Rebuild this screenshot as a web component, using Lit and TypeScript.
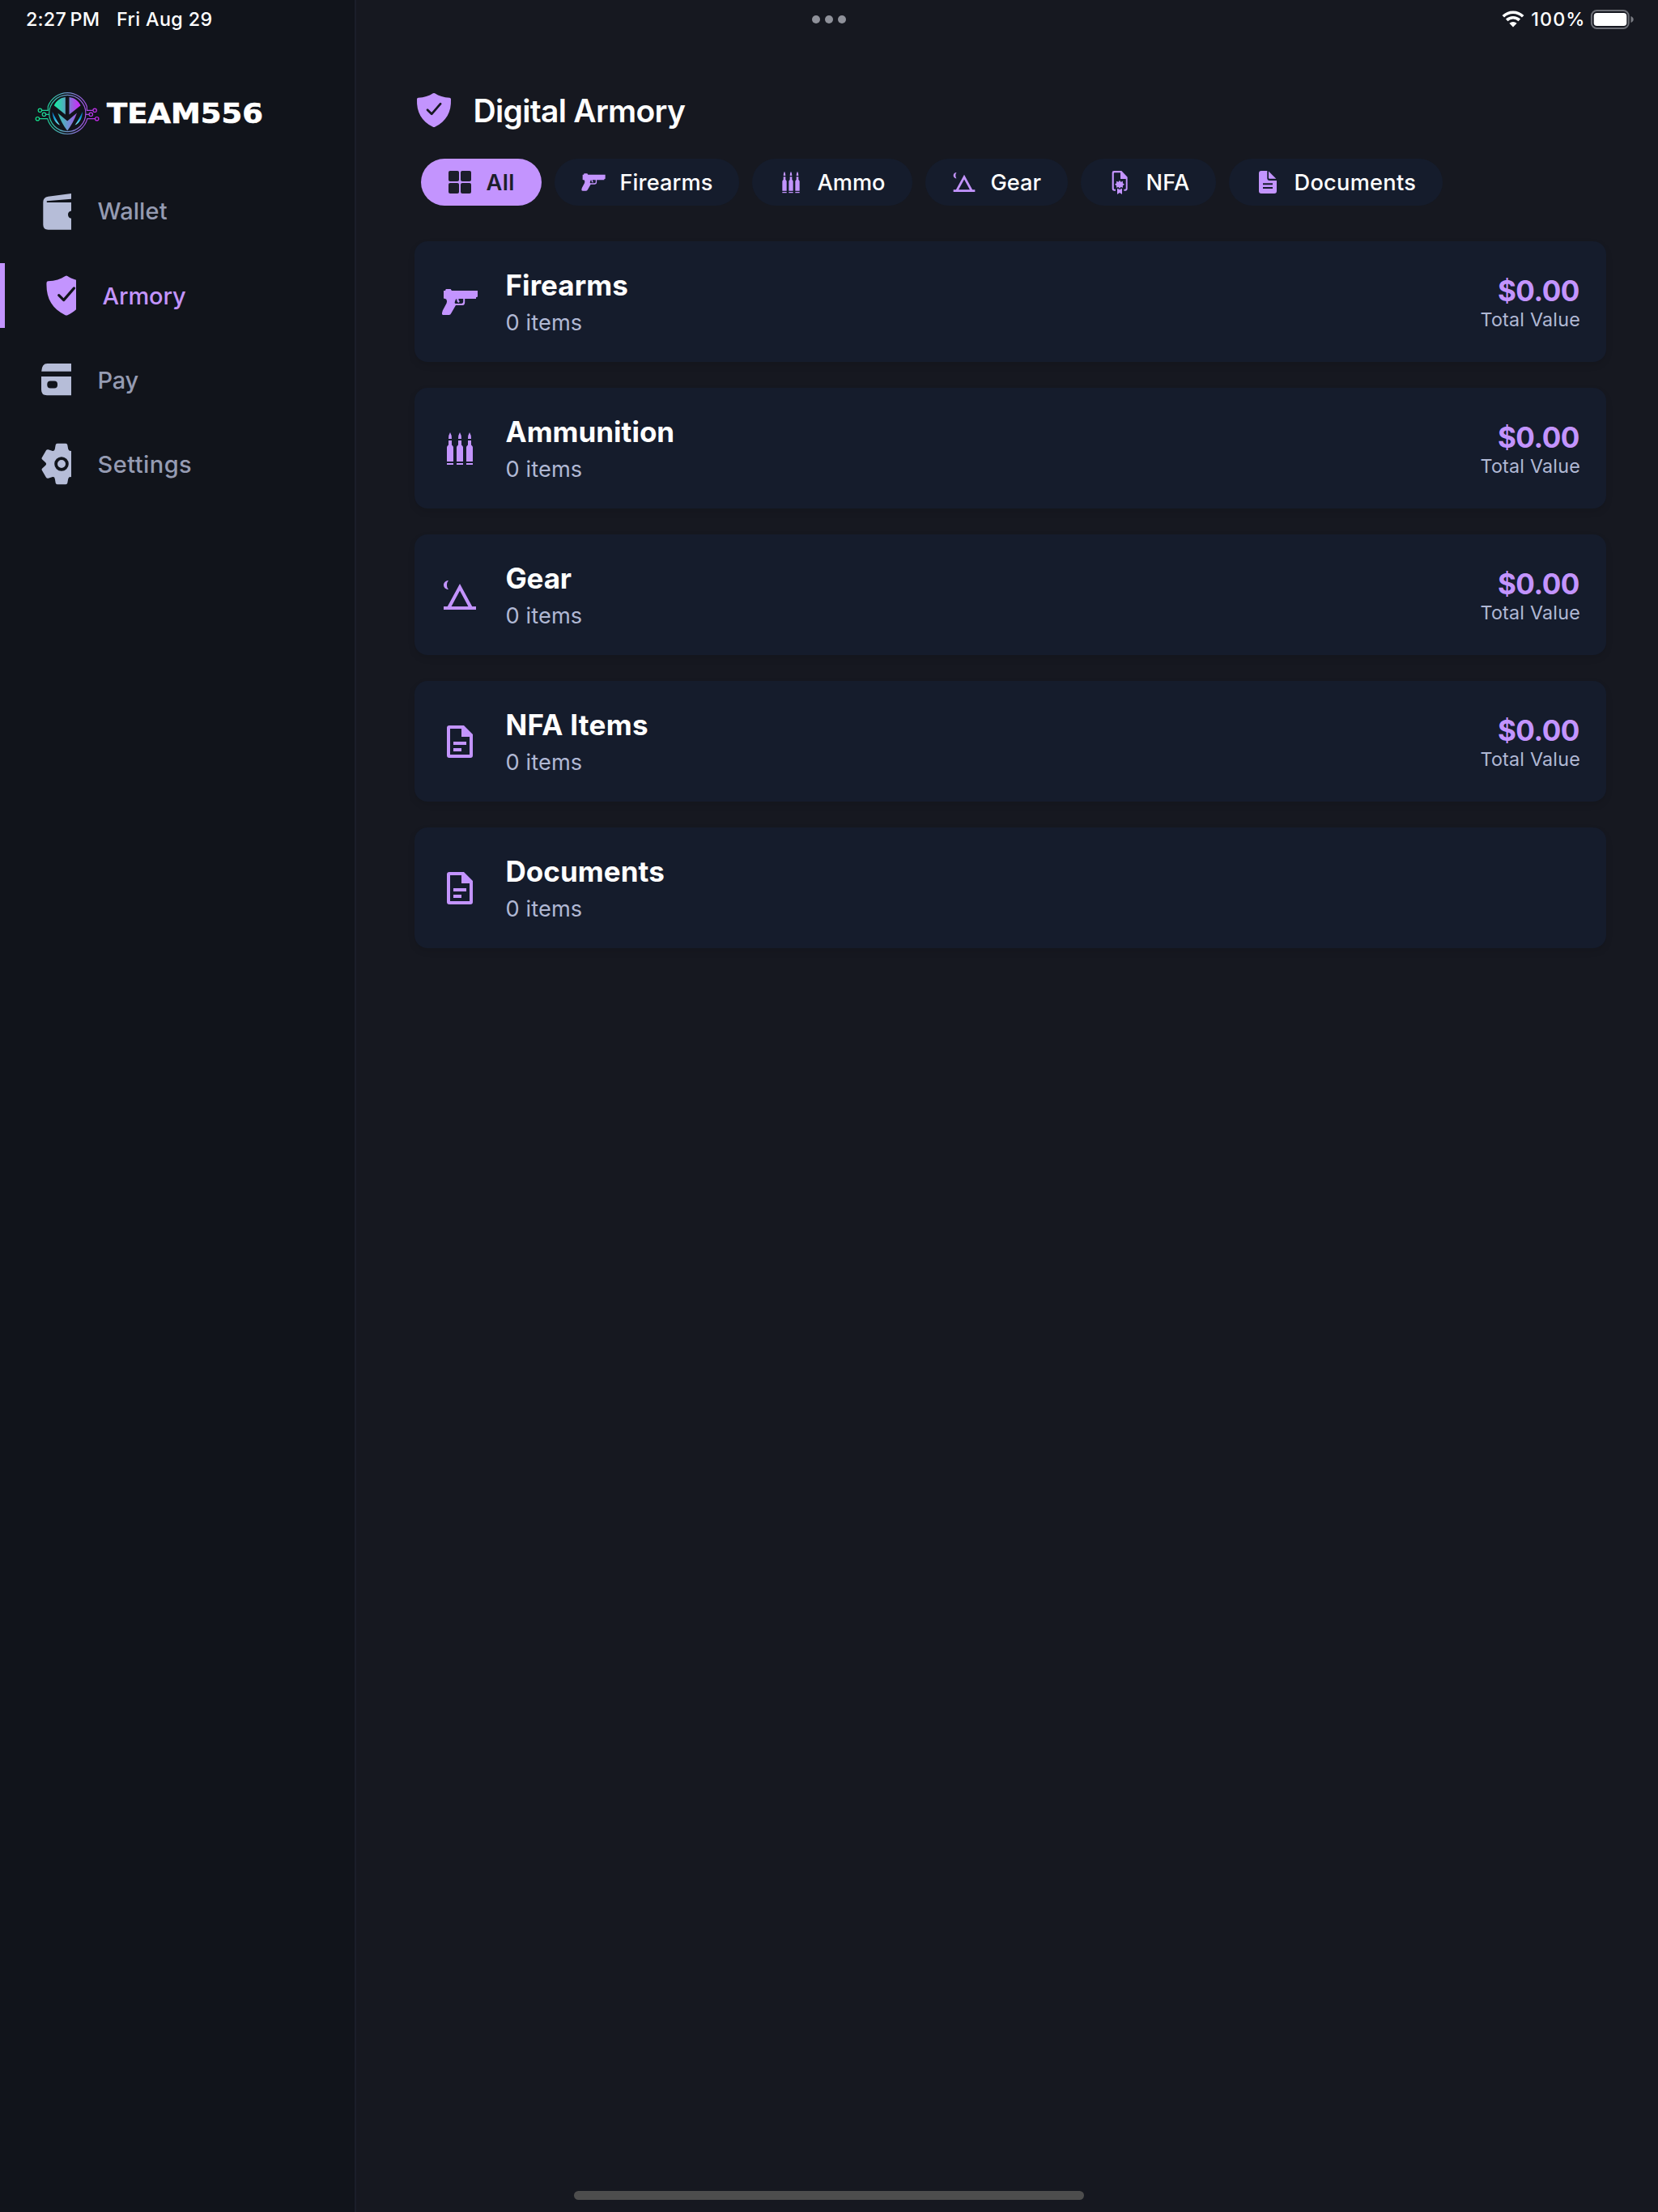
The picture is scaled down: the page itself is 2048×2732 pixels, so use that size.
import { LitElement, html, css, svg, TemplateResult } from "lit";

const gun = svg`<path fill-rule="evenodd" d="M4 10H6L6.8 8H12.6L14 10H46V17.6L44 18.2V20H30.2V24.4Q30.2 28 26.6 28H19L13.4 37.8Q12.4 40 10.6 40H4Q1.6 40 2 37.4L2.8 34.6L7.6 25.4Q8.6 22.4 7.2 20.4L4 19.6ZM18.4 22.2Q16.6 26 19 26H25.6Q28.2 26 28.2 23.6V20H22.4Q22.2 22.4 23.8 23.6L22.6 25Q19.8 23.4 20.4 20.4H19Z"/>`;

const bullet = (x: number) => svg`<path d="M${x + 2} 12Q${x + 2} 7 ${x + 4} 4Q${x + 6} 7 ${x + 6} 12ZM${x + 2} 14H${x + 6}V19.4Q${x + 8} 21 ${x + 8} 22.6V40H${x}V22.6Q${x} 21 ${x + 2} 19.4ZM${x} 42H${x + 8}V44H${x}Z"/>`;
const ammo = svg`${bullet(8)}${bullet(20)}${bullet(32)}`;

const tent = svg`<path d="M10 6C6.500 6 4 8.500 4 11.500S6.500 17 10 17C8.500 15.600 8 13.500 8 11.500S8.500 7.400 10 6Z"/>
  <path fill-rule="evenodd" d="M24 10L39.200 38H44V42H4V38H8.800ZM24 18.600L13.600 38H34.400Z"/>`;

const file = svg`<path fill-rule="evenodd" d="M11 4H29L40 15V41Q40 44 37 44H11Q8 44 8 41V7Q8 4 11 4ZM12 8V40H36V18H26V8ZM16 24H32V28H16ZM16 32H26V36H16Z"/>`;

const certificate = svg`<path fill-rule="evenodd" d="M13.500 3H27.500L38.500 14.500V36.500Q38.500 40 35 40H32V37.200H34Q35.600 37.200 35.600 35.600V18H25.500V6.200H14.600Q13.200 6.200 13.200 7.600V35.600Q13.200 37.200 14.800 37.200H16.500V40H13.500Q10 40 10 36.500V6.500Q10 3 13.500 3Z"/>
  <path d="M24 20.500L26.200 23.500L30 22.200L29.800 26L33 28L29.800 30.200L30 34L26.200 33L24 35.500L21.800 33L18 34L18.200 30.200L15 28L18.200 26L18 22.200L21.800 23.500Z"/>
  <path d="M19.500 35.500L24 37.500L28.500 35.500V46.500L24 43.500L19.500 46.500Z"/>`;

const doc = svg`<path fill-rule="evenodd" transform="scale(1.5)" d="M8 2H15.300V11.600Q15.300 14 17.700 14H27V27Q27 30 24 30H8Q5 30 5 27V5Q5 2 8 2ZM10 17.300H22V19.200H10ZM10 22H22V23.900H10Z"/>
  <path transform="scale(1.5)" d="M17 2.500L26.300 11.800H18.200Q17 11.800 17 10.600Z"/>`;

const grid = svg`<g transform="scale(1.5)"><rect x="2" y="2" width="13" height="13" rx="2"/><rect x="17" y="2" width="13" height="13" rx="2"/><rect x="2" y="17" width="13" height="13" rx="2"/><rect x="17" y="17" width="13" height="13" rx="2"/></g>`;

const shield = svg`<path d="M26.600 3.900Q28 3 29.400 3.900C35 7.600 42 9.800 50.600 10.300Q52.400 10.400 52.500 12.200C53.200 31 46 43.800 29.400 52.200Q28 52.800 26.600 52.200C10 43.800 2.800 31 3.500 12.200Q3.600 10.400 5.400 10.300C14 9.800 21 7.600 26.600 3.900Z"/>
  <path class="cut" d="M18.700 27.600L24.700 33.600L37.500 18.900"/>`;

const wallet = svg`<path fill-rule="evenodd" d="M40 6L11.500 9.800Q5.300 10.800 5.300 16.500V44.500Q5.300 50.700 11.500 50.700H40V36.700Q36 36 36 32T40 27.400V17H9.800V15.300L40 12.700Z"/>`;

const pay = svg`<path d="M40 8H10.500Q3.600 8 3.200 17.700H40ZM40 24H3V40.300Q3 47.300 10 47.300H40Z"/><rect class="hole" x="10.300" y="29.500" width="12.700" height="9" rx="4"/>`;

const cog = svg`<path d="M22.800 2.700H33.200Q35 2.700 35.300 4.500L36.200 9.600Q36.700 12 39 12L45.700 10L53 22L46.500 28L53 34L45.700 46L39 44Q36.700 44 36.200 46.400L35.300 51.600Q35 53.300 33.200 53.300H22.800Q21 53.300 20.700 51.600L19.800 46.400Q19.500 43.700 17 44.100L11.600 45.700Q10 46.300 9 44.700L3.900 36Q3 34.500 4.200 33.400L8 29.900Q10.200 28 8 26.100L4.200 22.600Q3 21.500 3.900 20L9 11.300Q10 9.700 11.600 10.300L17 11.900Q19.500 12.300 19.800 9.600L20.700 4.500Q21 2.700 22.800 2.700Z"/>
  <circle class="ring" cx="28" cy="28" r="6.900"/>`;

interface Nav { label: string; icon: TemplateResult; ls: number; active?: boolean }
const NAV: Nav[] = [
  { label: "Wallet", icon: wallet, ls: 0.1 },
  { label: "Armory", icon: shield, ls: -0.1, active: true },
  { label: "Pay", icon: pay, ls: -0.3 },
  { label: "Settings", icon: cog, ls: 0.45 },
];

interface Chip { label: string; icon: TemplateResult; width: number; ls: number; active?: boolean }
const CHIPS: Chip[] = [
  { label: "All", icon: grid, width: 149, ls: 0.4, active: true },
  { label: "Firearms", icon: gun, width: 228, ls: 0.1 },
  { label: "Ammo", icon: ammo, width: 198, ls: 0 },
  { label: "Gear", icon: tent, width: 176, ls: 0 },
  { label: "NFA", icon: certificate, width: 167, ls: 0.2 },
  { label: "Documents", icon: doc, width: 264, ls: 0.27 },
];

interface Category { title: string; items: number; icon: TemplateResult; ls: number; value?: string }
const CATEGORIES: Category[] = [
  { title: "Firearms", items: 0, icon: gun, ls: 0.05, value: "$0.00" },
  { title: "Ammunition", items: 0, icon: ammo, ls: 0, value: "$0.00" },
  { title: "Gear", items: 0, icon: tent, ls: -0.16, value: "$0.00" },
  { title: "NFA Items", items: 0, icon: file, ls: 0.3, value: "$0.00" },
  { title: "Documents", items: 0, icon: file, ls: 0.05 },
];

const box48 = (icon: TemplateResult) => html`<svg class="icon" viewBox="0 0 48 48">${icon}</svg>`;

class TeamLogo extends LitElement {
  static styles = css`
    :host { display: block; width: 290px; height: 60px; }
    svg { display: block; width: 290px; height: 60px; }
    .word { font: 700 33px "DejaVu Sans", sans-serif; fill: #fff; stroke: #fff; stroke-width: 0.6; }
  `;
  render() {
    return html`<svg viewBox="40 110 290 60">
      <defs>
        <linearGradient id="g" gradientUnits="userSpaceOnUse" x1="44" y1="0" x2="122" y2="0">
          <stop offset="0" stop-color="#10e58a"/><stop offset=".22" stop-color="#25c99c"/><stop offset=".5" stop-color="#6c93c8"/><stop offset=".8" stop-color="#a24fe0"/><stop offset="1" stop-color="#cc22ee"/>
        </linearGradient>
        <linearGradient id="d" gradientUnits="userSpaceOnUse" x1="67" y1="0" x2="100" y2="0">
          <stop offset="0" stop-color="#14efa0"/><stop offset=".45" stop-color="#5d9fc4"/><stop offset=".6" stop-color="#8a6fdc"/><stop offset="1" stop-color="#d61fff"/>
        </linearGradient>
        <linearGradient id="v" gradientUnits="userSpaceOnUse" x1="71" y1="0" x2="96" y2="0">
          <stop offset="0" stop-color="#2fc7a8"/><stop offset=".5" stop-color="#6c93d0"/><stop offset="1" stop-color="#a850e8"/>
        </linearGradient>
        <linearGradient id="e" gradientUnits="userSpaceOnUse" x1="0" y1="138" x2="0" y2="155">
          <stop offset="0" stop-color="#0a5fae"/><stop offset=".5" stop-color="#17a6dd"/><stop offset="1" stop-color="#8ff5f5"/>
        </linearGradient>
      </defs>
      <g fill="none" stroke="url(#g)" stroke-width="1.200">
        <circle cx="83.300" cy="140" r="22.600"/>
        <path d="M51.700 136.300H59.300V131.500A25.500 25.500 0 0 1 107.300 131.500V136.300H114.800M48.700 146.700H58.700A25.500 25.500 0 0 0 107.900 146.700H117.400M56.700 141.300H61M105.600 141.300H110"/>
        <circle cx="49.400" cy="136.300" r="2.200"/><circle cx="54.400" cy="141.300" r="2.200"/><circle cx="46.400" cy="146.700" r="2.200"/>
        <circle cx="117.100" cy="136.300" r="2.200"/><circle cx="112.300" cy="141.300" r="2.200"/><circle cx="119.700" cy="146.700" r="2.200"/>
      </g>
      <path fill="url(#d)" d="M66.800 130.200C69.500 124.500 74.500 120.500 80.800 119.900V141.500ZM99.600 130.200C97 124.500 92 120.500 85.500 119.900V141.500Z"/>
      <path fill="url(#v)" d="M71.500 139.800L83.200 149.500L95 139.500C92 148 88 155 83.200 161.500C78 155 74.500 148 71.500 139.800Z"/>
      <path fill="url(#e)" d="M64.600 138C65 146 68 152 74 154.500C70.500 149.500 67.800 144 64.600 138ZM102 138C101.600 146 98.500 152 92.600 154.500C96 149.500 99 144 102 138Z"/>
      <text class="word" x="132" y="151.700" textLength="193" lengthAdjust="spacingAndGlyphs">TEAM556</text>
    </svg>`;
  }
}
customElements.define("team-logo", TeamLogo);

class AppRoot extends LitElement {
  static styles = css`
    :host { display: block; }
    * { box-sizing: border-box; }
    .screen {
      position: relative; display: flex; width: 2048px; height: 2732px; overflow: hidden;
      background: #161820; color: #fff; font-family: "Inter", sans-serif; white-space: nowrap;
    }
    svg { display: block; flex: none; }

    .status {
      position: absolute; inset: 0 0 auto 0; height: 47px; padding: 0 30px 0 32px;
      display: flex; align-items: center; justify-content: space-between;
      font-size: 23.3px; font-weight: 500; line-height: 47px;
    }
    .side { display: flex; align-items: center; width: 400px; }
    .side.end { justify-content: flex-end; }
    .time { letter-spacing: 0.22px; word-spacing: -1.9px; margin-right: 20.8px; }
    .date { letter-spacing: 0.38px; }
    .dots { display: flex; gap: 6px; margin: 1px 2px 0 0; }
    .dots i { width: 10px; height: 10px; border-radius: 50%; background: #8f919a; }
    .wifi { width: 28px; height: 21px; margin: 0 8px 0 0; }
    .percent { letter-spacing: 1.08px; margin-right: 5.5px; }
    .battery { width: 54px; height: 24px; margin-top: 1px; }

    .sidebar {
      flex: none; width: 440px; background: #11141b; border-right: 2px solid #1b1e2a;
      padding-top: 110px;
    }
    team-logo { margin-left: 40px; }
    .nav { display: flex; flex-direction: column; gap: 24px; margin-top: 51px; }
    .item {
      display: flex; align-items: center; gap: 32.5px; height: 80px; padding-left: 48px;
      font-size: 29px; font-weight: 500; color: #959bb2;
    }
    .item span { line-height: 36px; padding-top: 2px; }
    .item:first-child span { padding: 0 0 1px; }
    .item svg { width: 40px; height: 56px; overflow: hidden; fill: #b6bdd8; }
    .item.on { border-left: 6px solid #c394fe; color: #c394fe; }
    .item.on svg { fill: #c394fe; }
    .cut { fill: none; stroke: #11141b; stroke-width: 3.2; stroke-linecap: round; stroke-linejoin: round; }
    .hole { fill: #11141b; }
    .ring { fill: none; stroke: #11141b; stroke-width: 3.8; }

    .main { flex: 1; padding: 112px 64px 0 72px; }
    .head { display: flex; align-items: center; gap: 24.5px; height: 48px; }
    .head svg { width: 48px; height: 48px; fill: #c394fe; }
    .head .cut { stroke: #161820; }
    .head h1 { margin: 1px 0 0; font-size: 39px; font-weight: 600; letter-spacing: -0.7px; line-height: 48px; }

    .chips { display: flex; gap: 16px; margin: 36px 0 0 8px; }
    .chip {
      display: flex; align-items: center; gap: 16.5px; height: 58px; padding-left: 32px;
      border-radius: 29px; background: #151c2c; font-size: 27.2px; font-weight: 500;
    }
    .chip .icon { width: 32px; height: 32px; fill: #c394fe; }
    .chip.on { background: #c394fe; color: #1c1e2a; font-weight: 600; }
    .chip.on .icon { fill: #1c1e2a; }

    .cards { display: flex; flex-direction: column; gap: 32px; margin-top: 44px; }
    .card {
      display: flex; align-items: center; gap: 32.5px; height: 149px; padding: 0 32px;
      border-radius: 16px; background: #151c2c; box-shadow: 0 4px 8px rgba(0, 0, 0, 0.1);
    }
    .card .icon { width: 48px; height: 48px; margin-top: 1px; fill: #c394fe; }
    .text { flex: 1; display: flex; flex-direction: column; }
    .title { font-size: 35px; font-weight: 700; line-height: 44px; }
    .count { padding-top: 8px; margin-bottom: -1px; font-size: 27.2px; line-height: 34px; letter-spacing: 0.1px; color: #b0b8d4; }
    .worth { text-align: right; padding-top: 2px; }
    .amount { font-size: 35px; font-weight: 700; line-height: 43px; letter-spacing: -0.45px; color: #c394fe; padding-right: 1px; }
    .label { font-size: 23.3px; line-height: 28px; letter-spacing: 0.21px; color: #b0b8d4; }

    .home {
      position: absolute; left: 709px; top: 2706px; width: 630px; height: 11px;
      border-radius: 6px; background: #4d4d4d;
    }
  `;

  render() {
    return html`<div class="screen">
      <aside class="sidebar">
        <team-logo></team-logo>
        <nav class="nav">
          ${NAV.map((n) => html`<div class="item ${n.active ? "on" : ""}">
            <svg viewBox="0 0 40 56">${n.icon}</svg>
            <span style="letter-spacing:${n.ls}px">${n.label}</span>
          </div>`)}
        </nav>
      </aside>
      <main class="main">
        <header class="head">
          <svg viewBox="0 0 56 56">${shield}</svg>
          <h1>Digital Armory</h1>
        </header>
        <div class="chips">
          ${CHIPS.map((c) => html`<div class="chip ${c.active ? "on" : ""}" style="width:${c.width}px">
            ${box48(c.icon)}<span style="letter-spacing:${c.ls}px">${c.label}</span>
          </div>`)}
        </div>
        <section class="cards">
          ${CATEGORIES.map((c) => html`<article class="card">
            ${box48(c.icon)}
            <div class="text">
              <div class="title" style="letter-spacing:${c.ls}px">${c.title}</div>
              <div class="count">${c.items} items</div>
            </div>
            ${c.value ? html`<div class="worth">
              <div class="amount">${c.value}</div>
              <div class="label">Total Value</div>
            </div>` : ""}
          </article>`)}
        </section>
      </main>
      <div class="status">
        <div class="side"><span class="time">2:27 PM</span><span class="date">Fri Aug 29</span></div>
        <div class="dots"><i></i><i></i><i></i></div>
        <div class="side end">
          <svg class="wifi" viewBox="0 0 28 21">
            <g fill="none" stroke="#fff" stroke-width="3.600">
              <path d="M1.800 7.300A17.300 17.300 0 0 1 26.200 7.300"/>
              <path d="M6.200 11.900A11.200 11.200 0 0 1 21.800 11.900"/>
            </g>
            <path fill="#fff" d="M14 20.600L9.400 15.800A6.600 6.600 0 0 1 18.600 15.800Z"/>
          </svg>
          <span class="percent">100%</span>
          <svg class="battery" viewBox="0 0 54 24">
            <rect x="1.900" y="1" width="45.800" height="22" rx="6.600" fill="none" stroke="#6c6e75" stroke-width="2"/>
            <rect x="4.700" y="4" width="40.600" height="16" rx="3.800" fill="#fff"/>
            <path fill="#7a7c83" d="M50.500 8Q53.700 9.300 53.700 12T50.500 16Z"/>
          </svg>
        </div>
      </div>
      <div class="home"></div>
    </div>`;
  }
}
customElements.define("app-root", AppRoot);
